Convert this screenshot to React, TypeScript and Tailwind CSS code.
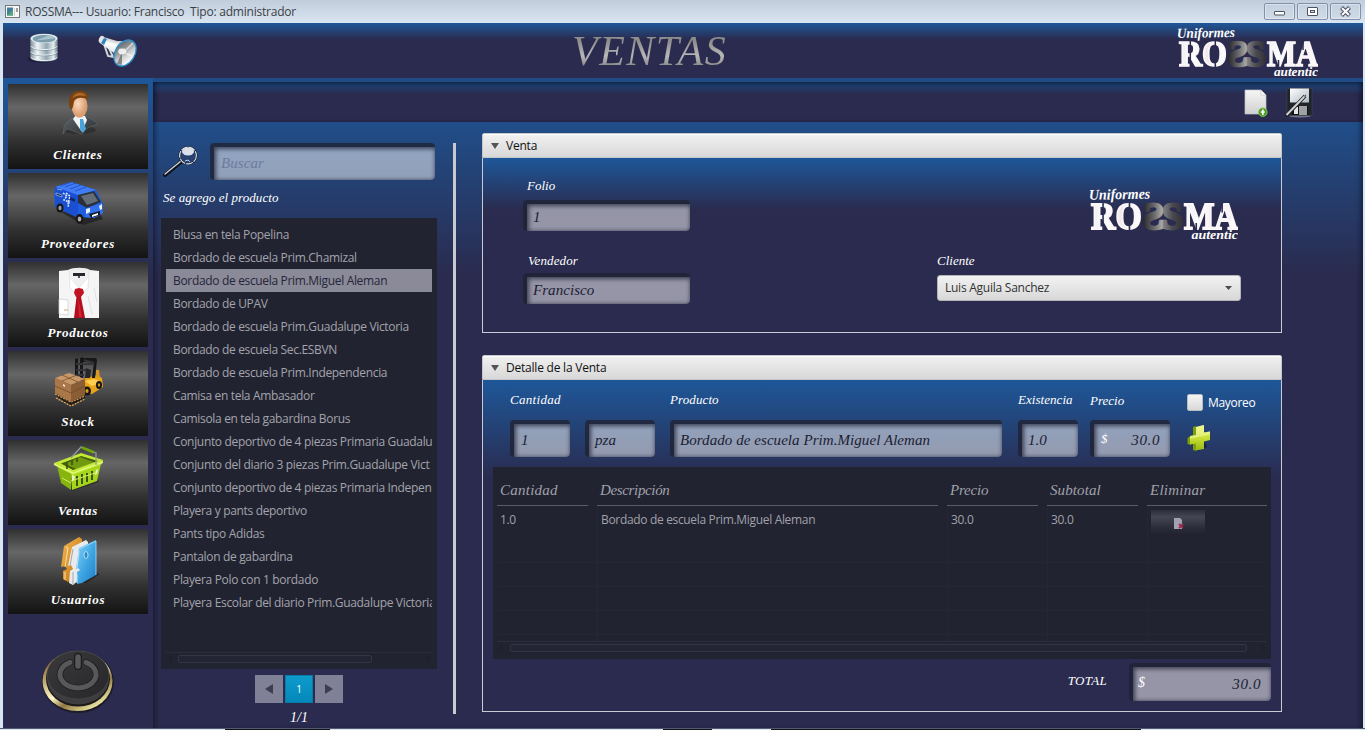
import React from "react";

const products = [
  "Blusa en tela Popelina",
  "Bordado de escuela Prim.Chamizal",
  "Bordado de escuela Prim.Miguel Aleman",
  "Bordado de UPAV",
  "Bordado de escuela Prim.Guadalupe Victoria",
  "Bordado de escuela Sec.ESBVN",
  "Bordado de escuela Prim.Independencia",
  "Camisa en tela Ambasador",
  "Camisola en tela gabardina Borus",
  "Conjunto deportivo de 4 piezas Primaria Guadalu",
  "Conjunto del diario 3 piezas Prim.Guadalupe Vict",
  "Conjunto deportivo de 4 piezas Primaria Indepen",
  "Playera y pants deportivo",
  "Pants tipo Adidas",
  "Pantalon de gabardina",
  "Playera Polo con 1 bordado",
  "Playera Escolar del diario Prim.Guadalupe Victoria",
];

const serif = "font-['Liberation_Serif',serif] italic";

function Logo({ className, id }: { className: string; id: string }) {
  return (
    <svg className={className} viewBox="0 0 141 51" preserveAspectRatio="none">
      <defs>
        <linearGradient id={id + "w"} x1="0" x2="1">
          <stop offset="0" stopColor="#e9eef2" />
          <stop offset=".3" stopColor="#fff" />
          <stop offset=".6" stopColor="#f1e8ec" />
          <stop offset="1" stopColor="#fff" />
        </linearGradient>
        <linearGradient id={id + "a"} x1="0" x2="1">
          <stop offset="0" stopColor="#b9b9b9" />
          <stop offset=".45" stopColor="#6c6c6e" />
          <stop offset="1" stopColor="#26262c" />
        </linearGradient>
        <linearGradient id={id + "b"} x1="0" x2="1">
          <stop offset="0" stopColor="#8a8a8e" />
          <stop offset=".5" stopColor="#4a4a50" />
          <stop offset="1" stopColor="#303036" />
        </linearGradient>
        <mask id={id + "m"}>
          <rect width="141" height="51" fill="#fff" />
          <path d="M13.300 13v30M38.300 13v30M101.500 34v8M126 14v10" stroke="#000" strokeWidth="1.500" />
        </mask>
      </defs>
      <text x="0" y="12" fontFamily="Liberation Serif" fontStyle="italic" fontWeight="bold" fontSize="14" fill="#fff" textLength="58" lengthAdjust="spacingAndGlyphs" transform="rotate(-1 0 12)">Uniformes</text>
      <g mask={`url(#${id}m)`} fontFamily="Liberation Serif" fontWeight="bold" fontSize="36" fill={`url(#${id}w)`} stroke="#fbf7f9" strokeWidth="1.700">
        <text x="2" y="39.500" textLength="48" lengthAdjust="spacingAndGlyphs">RO</text>
        <text x="90" y="39.500" textLength="51" lengthAdjust="spacingAndGlyphs">MA</text>
      </g>
      <g fontFamily="Liberation Serif" fontWeight="bold" fontSize="36" strokeWidth="2.600">
        <text transform="translate(71 39.500) scale(-1 1)" x="0" y="0" textLength="20" lengthAdjust="spacingAndGlyphs" fill={`url(#${id}a)`} stroke={`url(#${id}a)`}>S</text>
        <text x="69" y="39.500" textLength="20" lengthAdjust="spacingAndGlyphs" fill={`url(#${id}b)`} stroke={`url(#${id}b)`}>S</text>
      </g>
      <text x="97" y="49.500" fontFamily="Liberation Serif" fontStyle="italic" fontWeight="bold" fontSize="12" fill="#fff" textLength="44" lengthAdjust="spacingAndGlyphs">autentic</text>
    </svg>
  );
}

function DatabaseIcon() {
  return (
    <svg className="h-8 w-8" viewBox="0 0 32 32">
      <defs>
        <linearGradient id="dbg" x1="0" x2="1">
          <stop offset="0" stopColor="#7d8f99" />
          <stop offset=".25" stopColor="#f0f6f8" />
          <stop offset=".6" stopColor="#93a6b0" />
          <stop offset=".85" stopColor="#e4ecef" />
          <stop offset="1" stopColor="#6b7d88" />
        </linearGradient>
      </defs>
      <ellipse cx="12" cy="27" rx="13" ry="3.5" fill="#171831" opacity=".7" />
      {[20, 14.500, 9].map((y) => (
        <g key={y}>
          <path d={`M2.500 ${y}v5.500c0 5 27 5 27 0v-5.500z`} fill="url(#dbg)" stroke="#5f7480" strokeWidth=".6" />
          <path d={`M3 ${y + 5.200}c1 4.500 25 4.500 26 0`} fill="none" stroke="#eaf3f7" strokeWidth="1" />
        </g>
      ))}
      <path d="M2.500 6.500v4c0 5 27 5 27 0v-4z" fill="url(#dbg)" />
      <ellipse cx="16" cy="6.500" rx="13.500" ry="4.800" fill="#d9e8ee" />
      <ellipse cx="16" cy="6.800" rx="11.500" ry="3.700" fill="#7e9dac" />
      <path d="M8 8.500l12-5c3 0 6 1 7 3z" fill="#a9c2cd" />
    </svg>
  );
}

function MegaphoneIcon() {
  return (
    <svg className="h-[34px] w-10" viewBox="0 0 40 34">
      <defs>
        <linearGradient id="mg1" x1=".6" y1="0" x2=".3" y2="1">
          <stop offset="0" stopColor="#8d9296" />
          <stop offset=".3" stopColor="#fff" />
          <stop offset=".6" stopColor="#d9dcde" />
          <stop offset="1" stopColor="#70757a" />
        </linearGradient>
        <linearGradient id="mg2" x1="0" y1="0" x2="1" y2=".6">
          <stop offset="0" stopColor="#55585c" />
          <stop offset=".4" stopColor="#8b8f92" />
          <stop offset=".65" stopColor="#c9cbcd" />
          <stop offset="1" stopColor="#fff" />
        </linearGradient>
      </defs>
      <path d="M6 9l4 12 5 1-5-11" fill="none" stroke="#d3d6d8" strokeWidth="2" />
      <path d="M4 1.500L19 6 33 6 19 31 16 18 2 8z" fill="url(#mg1)" />
      <ellipse cx="3.500" cy="4.500" rx="2.600" ry="3.800" transform="rotate(20 3.500 4.500)" fill="#e4e6e8" />
      <path d="M6 3l3 1-3 6-3-2z" fill="#2f86bd" />
      <ellipse cx="27" cy="18" rx="9.800" ry="14" transform="rotate(32 27 18)" fill="url(#mg2)" stroke="#2d90cd" strokeWidth="1.300" />
      <path d="M24 17L19 29l5 1z" fill="#222" opacity=".45" />
      <path d="M26 17l9-9M27 18l7 3" stroke="#fff" strokeWidth="1.500" opacity=".6" />
      <ellipse cx="24.500" cy="16.500" rx="4.500" ry="3.300" fill="#ededed" stroke="#9a9da0" strokeWidth=".6" />
    </svg>
  );
}

function PersonIcon() {
  return (
    <g>
      <defs>
        <radialGradient id="pf" cx=".4" cy=".4">
          <stop offset="0" stopColor="#fbdcc0" />
          <stop offset="1" stopColor="#dd9d72" />
        </radialGradient>
        <linearGradient id="ps" x1="0" y1="0" x2="1" y2="1">
          <stop offset="0" stopColor="#5d6469" />
          <stop offset="1" stopColor="#2a2e32" />
        </linearGradient>
      </defs>
      <ellipse cx="26" cy="42" rx="17" ry="4" fill="#222" opacity=".5" />
      <path d="M10 46c0-8 3-13 12-17l11-1c6 3 10 6 12 8-8 3-12 3-16 10-6-1-9-4-15-5-2 1-2 3-4 5z" fill="url(#ps)" stroke="#777c80" strokeWidth=".4" />
      <path d="M20 31l3-4 9 1 2 4-5 12z" fill="#eef3f6" />
      <path d="M27 31l3 0 3 10-3 4-3-4z" fill="#4aa3dc" />
      <ellipse cx="26.500" cy="18" rx="8" ry="11.500" fill="url(#pf)" />
      <path d="M17 21c-3-10 0-18 10-18 7 0 9 4 8 9-4-3-10-3-13 0-2 2-1 6-3 9z" fill="#7b420f" />
      <path d="M19 10c3-6 11-7 14-2-5-1-9-1-14 2z" fill="#ad6928" />
    </g>
  );
}

function VanIcon() {
  return (
    <g>
      <path d="M8 35l22 13 20-6-5-9z" fill="#151515" opacity=".6" />
      <path d="M1 18L2 10 18 5 43 13l7 14-1 10-8 4-15-1L2 30z" fill="#1f5de0" />
      <path d="M2 10L18 5l25 8-18 6z" fill="#3f7cf5" />
      <path d="M2 10l23 8v23L2 30z" fill="#194fd0" />
      <path d="M25 18l16-4 7 11-14 6-9-5z" fill="#2b3038" />
      <path d="M28 19l12-3 5 8-11 4z" fill="#646d76" />
      <path d="M34 31l15-5 1 10-9 5-9-1z" fill="#3370ec" />
      <path d="M36 37l11-3v4l-9 3z" fill="#101820" />
      <path d="M33 32l4-1v4l-4 2zM46 29l3-2v5l-2 1z" fill="#e6f4fa" />
      <path d="M3 16l6 2v2l-6-2zM4 12l5 1" fill="#0c2257" stroke="#c6dbff" strokeWidth=".6" />
      <path d="M10 16l4 3-3 4 5 2-1 5M13 16l4 3-2 8" fill="none" stroke="#e0ebff" strokeWidth="1.500" strokeDasharray="2 1" />
      <path d="M17 20l5 2v3l-5-2z" fill="#13285f" />
      <path d="M7 9l12-4M12 10l11-4M17 12l11-4M22 14l11-4" stroke="#1b4bc0" strokeWidth=".8" />
      <ellipse cx="7" cy="31" rx="3.500" ry="4.500" fill="#171717" /><ellipse cx="7" cy="31" rx="1.600" ry="2.200" fill="#999" />
      <ellipse cx="26.500" cy="42" rx="3.800" ry="5" fill="#171717" /><ellipse cx="26.500" cy="42" rx="1.800" ry="2.500" fill="#aaa" />
      <path d="M39 38l6-2v2l-6 2z" fill="#fff" />
    </g>
  );
}

function ShirtIcon() {
  return (
    <g>
      <path d="M6 5l9-1c5-3 18-3 22 0l9 1v47H6z" fill="#f5f5f6" />
      <path d="M16 5L17 22l5 5 4-5zM36 5l-1 17-5 5-4-5z" fill="#fff" stroke="#d6d6da" strokeWidth=".6" />
      <path d="M16 5c5-3 15-3 20 0l-2 8-8 9-8-9z" fill="#f0f0f2" stroke="#e0e0e3" strokeWidth=".5" />
      <path d="M20 7h12v3H20z" fill="#27272b" /><path d="M25 10h2v2h-2z" fill="#555" />
      <path d="M22 23l4-1 4 1 1 4-3 4h-5l-2-4z" fill="#c01424" />
      <path d="M23.500 31h4.500l4 21H21z" fill="#b30d1b" />
      <path d="M25 31l4 20h-3z" fill="#de3240" opacity=".7" />
      <path d="M6 33l9 1v15l-9-1z" fill="#fff" stroke="#cfcfcf" strokeWidth=".7" />
      <path d="M11 44h4" stroke="#d6b58c" strokeWidth="1.200" />
      <path d="M35 30l4 18M41 22l3 14" stroke="#e0e0e4" strokeWidth="1" />
    </g>
  );
}

function ForkliftIcon() {
  return (
    <g>
      <path d="M30 24l14-4 5 3 1 9-11 7-9-2z" fill="#e9a41c" />
      <path d="M32 26l9-2 8 3-10 4z" fill="#ffd050" />
      <path d="M22 4l3-1v26h-3zM27 3l3-1v28h-3zM30 3h13l1 2-2 18h-3l2-16H30z" fill="#171719" />
      <path d="M23 9h17M23 15h12M23 20h8M31 5l10 3" stroke="#333338" strokeWidth="2" />
      <path d="M33 13l5 2-1 8h-5z" fill="#26262a" />
      <path d="M43 15l3 0 1 8-4-1z" fill="#d8991c" />
      <ellipse cx="34" cy="36" rx="4" ry="4.500" fill="#151515" /><ellipse cx="34" cy="36" rx="1.600" ry="2" fill="#d99b20" />
      <ellipse cx="46" cy="30" rx="3" ry="4" fill="#151515" /><ellipse cx="46" cy="30" rx="1.200" ry="1.700" fill="#d99b20" />
      <path d="M2 40l16 11 14-8v-4H2z" fill="#211b14" />
      <path d="M2 39l16 8 14-6M3 43l15 8 14-7" fill="none" stroke="#d6a765" strokeWidth="1.300" strokeDasharray="2 1" />
      <path d="M2 23l14-5 16 6-14 6z" fill="#c99869" />
      <path d="M2 23l16 7v17L2 38z" fill="#aa7748" />
      <path d="M18 30l14-6v16l-14 7z" fill="#8b5d36" />
      <path d="M2 31l16 7 14-7M9 20l16 7M24 20L9 26" fill="none" stroke="#6e4526" strokeWidth=".7" />
      <path d="M10 29l2 1v2l-2-1z" fill="#ece6dd" />
    </g>
  );
}

function BasketIcon() {
  return (
    <g>
      <path d="M6 36l13 11 27-9-4-9z" fill="#111" opacity=".4" />
      <path d="M4 21l14 9v16L8 39z" fill="#86b50d" />
      <path d="M18 30l30-10-4 17-25 9z" fill="#a5d51b" />
      <path d="M5 20L27 11l22 7-29 11z" fill="#445e0b" />
      <path d="M12 20l15-7 16 6-20 6z" fill="#719a11" />
      <path d="M1 19L28 9l22 7-1 4-29 11L1 21z M8 19.500l12 6.500 25-9-17-5z" fill="#c3ea34" fillRule="evenodd" />
      <path d="M1 20l19 9 30-11" fill="none" stroke="#e4f98a" strokeWidth="1.200" />
      <path d="M24 32v10M29 30v10M34 29v9M39 27v9" stroke="#3c530c" strokeWidth="2" />
      <path d="M14 19v6M19 16v5M24 14v4" stroke="#36490e" strokeWidth="1.500" />
      <path d="M9 34l9 5M18 37l27-9" stroke="#d2ef68" strokeWidth="1" />
      <path d="M22 32l-1 4-2 1v-6zM45 25l-1 5-2 1 1-5z" fill="#e9f4cf" />
      <path d="M18 14L28 3l15 6v12" fill="none" stroke="#939aa0" strokeWidth="1.300" />
      <path d="M29 3.500l12 5" stroke="#71a50a" strokeWidth="2.800" />
    </g>
  );
}

function FoldersIcon() {
  return (
    <g>
      <defs>
        <linearGradient id="fb" x1="0" y1="0" x2="1" y2="1">
          <stop offset="0" stopColor="#8fd3f7" /><stop offset=".5" stopColor="#42a9e4" /><stop offset="1" stopColor="#1b7cc4" />
        </linearGradient>
        <linearGradient id="fo" x1="0" y1="0" x2="1" y2="1">
          <stop offset="0" stopColor="#f6bb54" /><stop offset="1" stopColor="#bc6b0b" />
        </linearGradient>
      </defs>
      <path d="M23 49l19-10 5 2-14 9z" fill="#111" opacity=".5" />
      <path d="M11 13L26 4l3 2v31l-14 12-5-3V38l4-2-2-3-4 1z" fill="url(#fo)" />
      <path d="M13 14l2 1-3 19M12 39v8" stroke="#ffe0a0" strokeWidth="1" fill="none" />
      <path d="M19 14l14-7 2 2v30L20 52l-4-2 1-12 3-2-2-4-3 1z" fill="#e8eaec" />
      <path d="M20 16l-3 17M20 39v12" stroke="#a6a9ac" strokeWidth="1" />
      <path d="M26 15L43 7v35L29 50l-5 1V39l3-2-2-2-2 1z" fill="url(#fb)" />
      <path d="M26 16L43 8v34" fill="none" stroke="#a6e0ff" strokeWidth=".8" />
      <path d="M26 18l-2 17M24 41v9" stroke="#b8e7ff" strokeWidth="1" />
      <ellipse cx="33" cy="22" rx="2" ry="3.500" fill="#238dca" stroke="#d8edf8" strokeWidth=".8" />
    </g>
  );
}

function PowerIcon() {
  return (
    <svg className="h-[64px] w-[74px]" viewBox="0 0 74 64">
      <defs>
        <linearGradient id="gold" x1="0" y1="0" x2=".7" y2="1">
          <stop offset="0" stopColor="#4f3a20" /><stop offset=".3" stopColor="#b0975c" /><stop offset=".6" stopColor="#fff9c7" /><stop offset=".75" stopColor="#8f7841" /><stop offset="1" stopColor="#f4eda9" />
        </linearGradient>
        <linearGradient id="pk" x1="0" y1="0" x2="1" y2="1">
          <stop offset="0" stopColor="#3a3a3c" /><stop offset="1" stopColor="#272729" />
        </linearGradient>
      </defs>
      <ellipse cx="37" cy="33" rx="36" ry="31" fill="#1d1b28" />
      <ellipse cx="36.500" cy="32" rx="35" ry="30" fill="url(#gold)" />
      <ellipse cx="37" cy="30" rx="32" ry="27.500" fill="#19191b" />
      <ellipse cx="37" cy="29.500" rx="31" ry="26" fill="#3d3d3f" />
      <ellipse cx="37" cy="26" rx="31" ry="24" fill="url(#pk)" stroke="#4a4a4c" strokeWidth=".6" />
      <path d="M29 13.300A18 13.500 0 1 0 45 13.300" fill="none" stroke="#1c1c1e" strokeWidth="6.500" strokeLinecap="round" />
      <path d="M29 13.300A18 13.500 0 1 0 45 13.300" fill="none" stroke="#58585a" strokeWidth="5" strokeLinecap="round" />
      <path d="M37 8v9" stroke="#1c1c1e" strokeWidth="8" strokeLinecap="round" />
      <path d="M37 8v9" stroke="#58585a" strokeWidth="5.500" strokeLinecap="round" />
    </svg>
  );
}

function MagnifierIcon() {
  return (
    <svg className="h-[31px] w-9" viewBox="0 0 36 31">
      <path d="M2 29L18 16" stroke="#10131c" strokeWidth="4" strokeLinecap="round" />
      <path d="M2 28L18 15" stroke="#d0d4d8" strokeWidth="1.400" strokeLinecap="round" />
      <circle cx="25" cy="9.500" r="8.600" fill="#29406c" fillOpacity=".7" stroke="#1a2234" strokeWidth="2" />
      <circle cx="25" cy="9.500" r="8.400" fill="none" stroke="#e2e6e9" strokeWidth="1.100" strokeDasharray="7 1" />
      <ellipse cx="25" cy="5.500" rx="6" ry="4" fill="#eef2f6" opacity=".9" />
      <path d="M22 15l3-1 2 2" stroke="#bce" strokeWidth="1" fill="none" />
    </svg>
  );
}

function NewDocIcon() {
  return (
    <svg className="h-[29px] w-6" viewBox="0 0 24 29">
      <defs><linearGradient id="nd" x1="0" y1="0" x2="0" y2="1"><stop offset="0" stopColor="#f6f6f6" /><stop offset="1" stopColor="#cfd0d1" /></linearGradient></defs>
      <path d="M1 2h16l5 5v19H1z" fill="url(#nd)" stroke="#bfc2c4" strokeWidth=".7" />
      <path d="M17 2l5 5h-5z" fill="#fff" stroke="#b8b8b8" strokeWidth=".6" />
      <circle cx="18.800" cy="24.200" r="4.300" fill="#4b9b24" stroke="#92cf63" strokeWidth=".8" />
      <path d="M18.800 21.500v5.500M16.800 24h4" stroke="#fff" strokeWidth="1.700" />
    </svg>
  );
}

function SaveIcon() {
  return (
    <svg className="h-[30px] w-7" viewBox="0 0 28 30">
      <defs><linearGradient id="sv" x1="0" y1="0" x2="1" y2="1"><stop offset="0" stopColor="#fff" /><stop offset="1" stopColor="#aebbc4" /></linearGradient></defs>
      <ellipse cx="15" cy="28" rx="11" ry="1.500" fill="#aab" opacity=".6" />
      <path d="M2 .500h25v27H4l-2-2z" fill="#20242b" stroke="#42474f" strokeWidth=".6" />
      <path d="M5 .500h19v14H5z" fill="url(#sv)" />
      <path d="M7 18h16v9H7z" fill="#101216" /><path d="M14 18h8v9h-8z" fill="#9fa2a4" /><path d="M9 19h4v7H9z" fill="#e5e5e5" />
      <path d="M1 28L20 8" stroke="#1c1c1f" strokeWidth="3.600" />
      <path d="M1.500 27L20 8" stroke="#cfd1d3" strokeWidth="2" />
      <path d="M20 7l1-0.500 0 1.500-2 2z" fill="#555" />
    </svg>
  );
}

function PlusIcon() {
  return (
    <svg className="h-[28px] w-6" viewBox="0 0 24 28">
      <defs><linearGradient id="pl" x1="0" y1="0" x2="0" y2="1"><stop offset="0" stopColor="#eef57e" /><stop offset=".5" stopColor="#c9df35" /><stop offset="1" stopColor="#93b816" /></linearGradient></defs>
      <path d="M7 25l4 2 9-4-2-5z" fill="#0e1230" opacity=".6" />
      <path d="M6 3l3-1v10H6zM.500 14l3-2v9l-3-1zM6 19l3-1v9l-3-1z" fill="#7d9e0b" />
      <path d="M9 3l8-2v7.500l6-1v8.500l-6 1.500v7.500l-8 1.500v-7l-6 1v-8.500l6-1z" fill="url(#pl)" />
      <path d="M9 3l8-2v7.500l6-1v3L3 15v-3l6-1z" fill="#f3f9a4" opacity=".55" />
    </svg>
  );
}

const nav = [
  { label: "Clientes", icon: <PersonIcon /> },
  { label: "Proveedores", icon: <VanIcon /> },
  { label: "Productos", icon: <ShirtIcon /> },
  { label: "Stock", icon: <ForkliftIcon /> },
  { label: "Ventas", icon: <BasketIcon /> },
  { label: "Usuarios", icon: <FoldersIcon /> },
];

function Field({ className, children }: { className: string; children: React.ReactNode }) {
  return (
    <div className={`${serif} flex shrink-0 items-center rounded-[4px] border-t-4 border-l-4 border-[#202434]/80 bg-white/50 bg-clip-padding text-[15px] tracking-[0.06px] text-[#1c1d33] shadow-[inset_1px_1px_4px_1px_rgba(32,34,52,0.75)] ${className}`}>
      {children}
    </div>
  );
}

function Label({ children, className = "tracking-[0.2px]" }: { children: React.ReactNode; className?: string }) {
  return <div className={`${serif} h-5 text-[13px] leading-5 whitespace-nowrap text-white ${className}`}>{children}</div>;
}

function Panel({ title, className, children }: { title: string; className: string; children: React.ReactNode }) {
  return (
    <section className={`flex w-[800px] flex-col ${className}`}>
      <div className="flex h-[25px] shrink-0 items-center rounded-t-[2px] border border-[#c4c6cb] bg-linear-to-b from-[#f1f1f1] to-[#d8d8d8] pl-2 shadow-[inset_0_1px_0_#ffffff]">
        <svg className="h-[6px] w-2" viewBox="0 0 8 6"><path d="M0 0h8L4 6z" fill="#555" /></svg>
        <span className="ml-[7px] text-[12px] tracking-[-0.22px] text-[#111]">{title}</span>
      </div>
      <div className="flex-1 border border-t-0 border-[#c9cad3] bg-[linear-gradient(#1e5799_0%,#2a2b4e_30%)]">{children}</div>
    </section>
  );
}

function Scrollbar({ thumb }: { thumb: string }) {
  return (
    <div className="flex h-[17px] items-start border-t border-[#2c2d3b] pt-[2px]">
      <svg className="h-2 w-3 shrink-0" viewBox="0 0 12 8"><path d="M6 1L3 4l3 3" fill="none" stroke="#1a1b24" /></svg>
      <div className={`h-2 rounded-[2px] border border-[#343544] bg-[#242534] ${thumb}`} />
      <svg className="ml-auto h-2 w-2 shrink-0" viewBox="0 0 8 8"><path d="M3 1l3 3-3 3" fill="none" stroke="#1a1b24" /></svg>
    </div>
  );
}

const columns = [
  { title: "Cantidad", value: "1.0", cls: "w-[100px]", line: "w-[91px] tracking-[0.25px]" },
  { title: "Descripción", value: "Bordado de escuela Prim.Miguel Aleman", cls: "w-[350px]", line: "w-[341px] tracking-[-0.35px]" },
  { title: "Precio", value: "30.0", cls: "w-[100px]", line: "w-[91px] tracking-[-0.2px]" },
  { title: "Subtotal", value: "30.0", cls: "w-[100px]", line: "w-[91px] tracking-[0.1px]" },
  { title: "Eliminar", value: "", cls: "w-[120px]", line: "w-[120px] tracking-[0.25px]" },
];

function WindowButton({ children }: { children: React.ReactNode }) {
  return (
    <button className="flex h-[17px] w-[31px] items-center justify-center rounded-[2px] border border-[#8091ab] bg-linear-to-b from-[#c4d0dd] to-[#cfdbe7] shadow-[inset_0_0_0_1px_rgba(255,255,255,0.35)]">
      <svg className="h-[11px] w-[13px]" viewBox="0 0 13 11">{children}</svg>
    </button>
  );
}

export default function App() {
  return (
    <div className="flex h-[730px] w-[1365px] flex-col overflow-hidden bg-[#d9e6f2] font-['Open_Sans','Noto_Sans',sans-serif]">
      <div className="flex h-[23px] shrink-0 items-center bg-linear-to-b from-[#c1cdda] to-[#d9e5f1] pr-1 pl-[5px]">
        <svg className="h-[13px] w-[15px]" viewBox="0 0 15 13">
          <rect x=".5" y=".5" width="14" height="12" fill="#f8f8f8" stroke="#777" />
          <rect x="2" y="2.500" width="6" height="8" fill="#437f9c" /><path d="M2 10.500l6-6v6z" fill="#54a574" />
          <path d="M12 3v4" stroke="#444" /><path d="M9.500 3v8" stroke="#ccc" />
        </svg>
        <span className="ml-[5px] text-[12px] tracking-[-0.22px] whitespace-pre text-[#3b4046]">ROSSMA--- Usuario: Francisco  Tipo: administrador</span>
        <div className="ml-auto flex gap-[2px]">
          <WindowButton><rect x="1.500" y="5.500" width="10" height="3.500" rx=".5" fill="#fff" stroke="#4b5263" /></WindowButton>
          <WindowButton><rect x="1.500" y="1.500" width="10" height="8" rx=".5" fill="#fff" stroke="#4b5263" /><rect x="4.500" y="4.500" width="4" height="2" fill="#d0dbe6" stroke="#4b5263" /></WindowButton>
          <WindowButton><path d="M2.500 1.500l8 8M10.500 1.500l-8 8" stroke="#4b5263" strokeWidth="4" /><path d="M3 2l7 7M10 2l-7 7" stroke="#fff" strokeWidth="2" /></WindowButton>
        </div>
      </div>

      <div className="mr-[2px] ml-[3px] flex h-[705px] shrink-0 flex-col">
        <header className="flex h-[55px] shrink-0 items-start bg-[linear-gradient(#1e5799_0%,#2a2b4e_30%)]">
          <div className="mt-[9px] ml-[25px]"><DatabaseIcon /></div>
          <div className="mt-3 ml-[38px]"><MegaphoneIcon /></div>
          <h1 className={`${serif} mt-[3px] ml-[434px] w-[170px] bg-linear-to-b from-[#8d8d8d] from-30% via-[#b8b8b8] via-60% to-[#8b8b8b] to-80% bg-clip-text text-[42px] leading-[50px] tracking-[1.5px] whitespace-nowrap text-transparent`}>VENTAS</h1>
          <Logo id="top" className="mt-[3px] ml-[435px] h-[51px] w-[141px] shrink-0" />
        </header>

        <div className="flex flex-1 bg-[linear-gradient(#204b84_0px,#204b84_4px,#2a2b4e_4px)]">
          <nav className="flex w-[150px] shrink-0 flex-col items-center gap-1 bg-[linear-gradient(#1e5799_0%,#2a2b4e_30%)] pt-[6px]">
            {nav.map((n) => (
              <button key={n.label} className="flex h-[85px] w-[140px] shrink-0 flex-col items-center bg-[linear-gradient(#303030_0%,#666666_27%,#303030_68%,#131313_100%)] pt-1">
                <svg className="h-[52px] w-[50px] shrink-0" viewBox="0 0 50 52">{n.icon}</svg>
                <span className="mt-[5px] font-['Liberation_Serif',serif] text-[13px] leading-5 font-bold tracking-[0.75px] text-white italic">{n.label}</span>
              </button>
            ))}
            <div className="mt-[31px]"><PowerIcon /></div>
          </nav>

          <main className="mt-1 flex flex-1 flex-col bg-[linear-gradient(#1e5799_0%,#2a2b4e_30%)] shadow-[inset_5px_0_5px_-3px_rgba(10,14,30,0.6),inset_-5px_0_5px_-3px_rgba(10,14,30,0.6)]">
            <div className="flex h-10 shrink-0 items-start bg-[linear-gradient(#1e4f8a_0%,#2a2b4e_30%)] shadow-[inset_0_4px_6px_-2px_rgba(10,14,30,0.7),inset_5px_0_5px_-3px_rgba(10,14,30,0.6),inset_-5px_0_5px_-3px_rgba(10,14,30,0.6)]">
              <div className="mt-[6px] ml-[1091px]"><NewDocIcon /></div>
              <div className="mt-[6px] ml-[17px]"><SaveIcon /></div>
            </div>

            <div className="flex flex-1 items-start">
              <aside className="ml-2 flex w-[276px] shrink-0 flex-col pt-[21px]">
                <div className="flex h-[37px] items-start">
                  <div className="mt-[3px] ml-[2px]"><MagnifierIcon /></div>
                  <Field className="ml-[11px] h-[37px] w-[225px] pl-[7px]"><span className="text-[#6c7c9c]">Buscar</span></Field>
                </div>
                <Label className="mt-2 ml-[2px] tracking-[0.06px]">Se agrego el producto</Label>
                <div className="mt-[10px] flex h-[451px] flex-col bg-[#222330] px-[5px] pt-[5px]">
                  <ul className="h-[429px] overflow-hidden">
                    {products.map((p, i) => (
                      <li key={p} className={`h-[23px] overflow-hidden pl-[7px] text-[12px] leading-[24px] tracking-[-0.33px] whitespace-nowrap ${i === 2 ? "bg-[#8a8a98] text-[#26263a]" : "text-[#a3a4ad]"}`}>{p}</li>
                    ))}
                  </ul>
                  <Scrollbar thumb="w-[194px]" />
                </div>
                <div className="mt-[6px] ml-[94px] flex gap-[2px]">
                  <button className="flex size-7 items-center justify-center bg-[#808096]"><svg className="h-[10px] w-2" viewBox="0 0 8 10"><path d="M8 0v10L0 5z" fill="#3c3d55" /></svg></button>
                  <button className="flex size-7 items-center justify-center border border-[#087aa8] bg-linear-to-b from-[#0d9ccc] to-[#0488b9] text-[10px] text-white">1</button>
                  <button className="flex size-7 items-center justify-center bg-[#808096]"><svg className="h-[10px] w-2" viewBox="0 0 8 10"><path d="M0 0v10l8-5z" fill="#3c3d55" /></svg></button>
                </div>
                <div className={`${serif} mt-[5px] w-[276px] text-center text-[14px] leading-5 text-white`}>1/1</div>
              </aside>

              <div className="mt-[21px] ml-4 h-[571px] w-[3px] shrink-0 bg-[#c8cacf]" />

              <div className="ml-[26px] pt-[11px]">
                <Panel title="Venta" className="h-[200px]">
                  <div className="flex">
                    <div className="ml-10 w-[167px] pt-[18px]">
                      <Label className="ml-1 tracking-[0px]">Folio</Label>
                      <Field className="mt-1 h-[31px] w-[167px] pl-[6px]">1</Field>
                      <Label className="mt-5 ml-[5px] tracking-[0.1px]">Vendedor</Label>
                      <Field className="mt-[2px] h-[31px] w-[167px] pl-[6px] tracking-[-0.4px]">Francisco</Field>
                    </div>
                    <div className="ml-[247px] w-[304px] pt-[29px]">
                      <Logo id="card" className="ml-[152px] h-[54px] w-[149px]" />
                      <Label className="mt-[10px] tracking-[0px]">Cliente</Label>
                      <div className="mt-1 flex h-[26px] items-center rounded-[3px] border border-[#b5b5b5] bg-linear-to-b from-[#f2f2f2] to-[#d8d8d8] pr-2 pl-[7px] text-[12px] tracking-[-0.25px] text-[#333]">
                        Luis Aguila Sanchez
                        <svg className="ml-auto h-1 w-[7px]" viewBox="0 0 7 4"><path d="M0 0h7L3.500 4z" fill="#4c4c4c" /></svg>
                      </div>
                    </div>
                  </div>
                </Panel>

                <Panel title="Detalle de la Venta" className="mt-[22px] h-[357px]">
                  <div className="flex h-[87px] pt-[10px] pl-[27px]">
                    <div><Label className="tracking-[0.3px]">Cantidad</Label><Field className="mt-[10px] h-[37px] w-[60px] pl-[7px]">1</Field></div>
                    <Field className="mt-[30px] ml-[15px] h-[37px] w-[70px] pl-[6px]">pza</Field>
                    <div className="ml-[15px]"><Label className="tracking-[0.1px]">Producto</Label><Field className="mt-[10px] h-[37px] w-[332px] pl-[6px]">Bordado de escuela Prim.Miguel Aleman</Field></div>
                    <div className="ml-4"><Label className="tracking-[0.05px]">Existencia</Label><Field className="mt-[10px] h-[37px] w-[60px] pl-[6px]">1.0</Field></div>
                    <div className="ml-3">
                      <Label className="pt-px tracking-[0px]">Precio</Label>
                      <Field className="mt-[10px] h-[37px] w-[80px] justify-between pr-[10px] pl-[7px]"><span className="mb-1 text-[13px] text-white">$</span><span className="tracking-[0.6px]">30.0</span></Field>
                    </div>
                    <div className="ml-[17px] pt-1">
                      <div className="flex h-[17px] items-center">
                        <span className="h-[17px] w-4 rounded-[2px] border border-[#b8bcc2] bg-linear-to-b from-[#f4f4f4] to-[#d9d9d9]" />
                        <span className="ml-[5px] text-[12px] tracking-[-0.3px] text-white">Mayoreo</span>
                      </div>
                      <div className="mt-[13px]"><PlusIcon /></div>
                    </div>
                  </div>

                  <div className="ml-[10px] h-[192px] w-[778px] bg-[#222330] px-1">
                    <div className="flex h-[39px]">
                      {columns.map((c) => (
                        <div key={c.title} className={`shrink-0 ${c.cls}`}>
                          <div className={`${serif} h-[39px] border-b border-[#5b5c68] pt-[13px] pl-[3px] text-[15px] leading-5 text-[#a0a1ab] ${c.line}`}>{c.title}</div>
                        </div>
                      ))}
                    </div>
                    <div className="flex h-[135px]">
                      {columns.map((c, i) => (
                        <div key={c.title} className={`shrink-0 bg-[repeating-linear-gradient(transparent_0px,transparent_23px,#262735_23px,#262735_24px)] bg-[position:0_9px] ${i ? "border-l border-[#262735]" : ""} ${c.cls}`}>
                          <div className="h-[33px] bg-[#222330] pt-1 pl-[3px] text-[12px] leading-[19px] tracking-[-0.33px] whitespace-nowrap text-[#a0a1ab]">
                            {c.value || (
                              <button className="flex h-[26px] w-[54px] items-center justify-center bg-[linear-gradient(#2d2e3b_0%,#454654_27%,#2b2c39_70%,#20212d_100%)]">
                                <svg className="h-[11px] w-[11px]" viewBox="0 0 11 11"><path d="M1 0h6l2 2v9H1z" fill="#a1a1b3" /><path d="M6 6l4 4M10 6l-4 4" stroke="#992b49" strokeWidth="1.800" /></svg>
                              </button>
                            )}
                          </div>
                        </div>
                      ))}
                    </div>
                    <Scrollbar thumb="ml-px w-[737px]" />
                  </div>

                  <div className="mt-1 flex justify-end pr-[10px]">
                    <Label className="mt-2 tracking-[0.3px]">TOTAL</Label>
                    <Field className="ml-[22px] h-[38px] w-[142px] justify-between pr-[10px] pl-[5px]"><span className="mb-1 text-[14px] text-white">$</span><span className="tracking-[0.6px]">30.0</span></Field>
                  </div>
                </Panel>
              </div>
            </div>
          </main>
        </div>
      </div>
      <div className="flex h-[2px] shrink-0 border-t border-[#555a73] bg-[#d9e6f2]">
        <i className="ml-[225px] h-px w-[105px] bg-[#111]" />
        <i className="ml-[333px] h-px w-[49px] bg-[#111]" />
        <i className="ml-[59px] h-px w-[370px] bg-[#111]" />
      </div>
    </div>
  );
}
